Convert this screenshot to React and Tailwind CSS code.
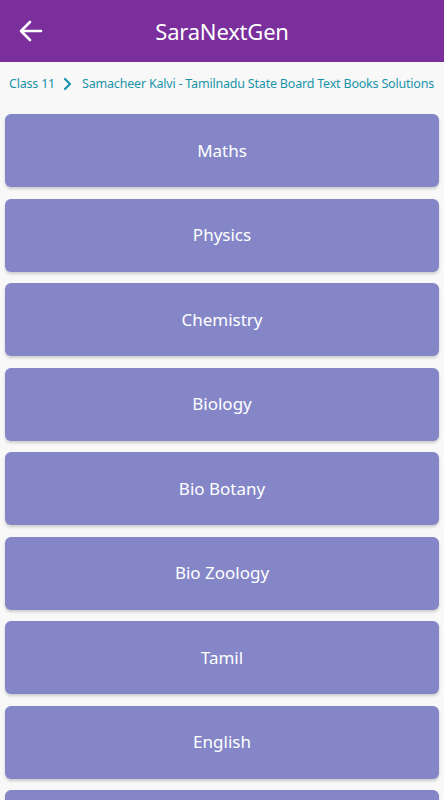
import React from 'react';

const subjects = ['Maths', 'Physics', 'Chemistry', 'Biology', 'Bio Botany', 'Bio Zoology', 'Tamil', 'English'];

export default function App() {
  return (
    <div className="w-[444px] h-[800px] overflow-hidden bg-[#f8f8f8] font-['Noto_Sans',sans-serif]">
      {/* Top bar */}
      <div className="h-[62px] bg-[#7a2f9c] flex items-center relative">
        <button className="absolute left-[18px] top-[19px] text-white">
          <svg width="26" height="24" viewBox="0 0 26 24" fill="none" stroke="white" strokeWidth="2.6" strokeLinecap="round" strokeLinejoin="round">
            <path d="M23 12H4" />
            <path d="M12 3L3 12l9 9" />
          </svg>
        </button>
        <h1 className="flex-1 text-center text-white text-[22px] tracking-[-0.2px]">SaraNextGen</h1>
      </div>

      {/* Breadcrumb */}
      <div className="h-[44px] flex items-center px-[9px] text-[12.5px] text-[#1a93a8] tracking-[-0.2px] whitespace-nowrap">
        <span>Class 11</span>
        <svg className="ml-[7px] mr-[10px] shrink-0" width="10" height="14" viewBox="0 0 10 14" fill="none" stroke="#1a93a8" strokeWidth="2.2" strokeLinecap="round" strokeLinejoin="round">
          <path d="M3 2l5 5-5 5" />
        </svg>
        <span>Samacheer Kalvi - Tamilnadu State Board Text Books Solutions</span>
      </div>

      {/* Subject list */}
      <div className="flex flex-col gap-[11.5px] px-[5px] pt-[8px]">
        {subjects.map((s) => (
          <div
            key={s}
            className="h-[73px] shrink-0 rounded-[6px] bg-[#8486c8] shadow-[0_2px_3px_rgba(0,0,0,0.18)] flex items-center justify-center text-white text-[17px]"
          >
            {s}
          </div>
        ))}
        {/* next card, label below the fold */}
        <div className="h-[73px] shrink-0 rounded-[6px] bg-[#8486c8] shadow-[0_2px_3px_rgba(0,0,0,0.18)]" />
      </div>
    </div>
  );
}
